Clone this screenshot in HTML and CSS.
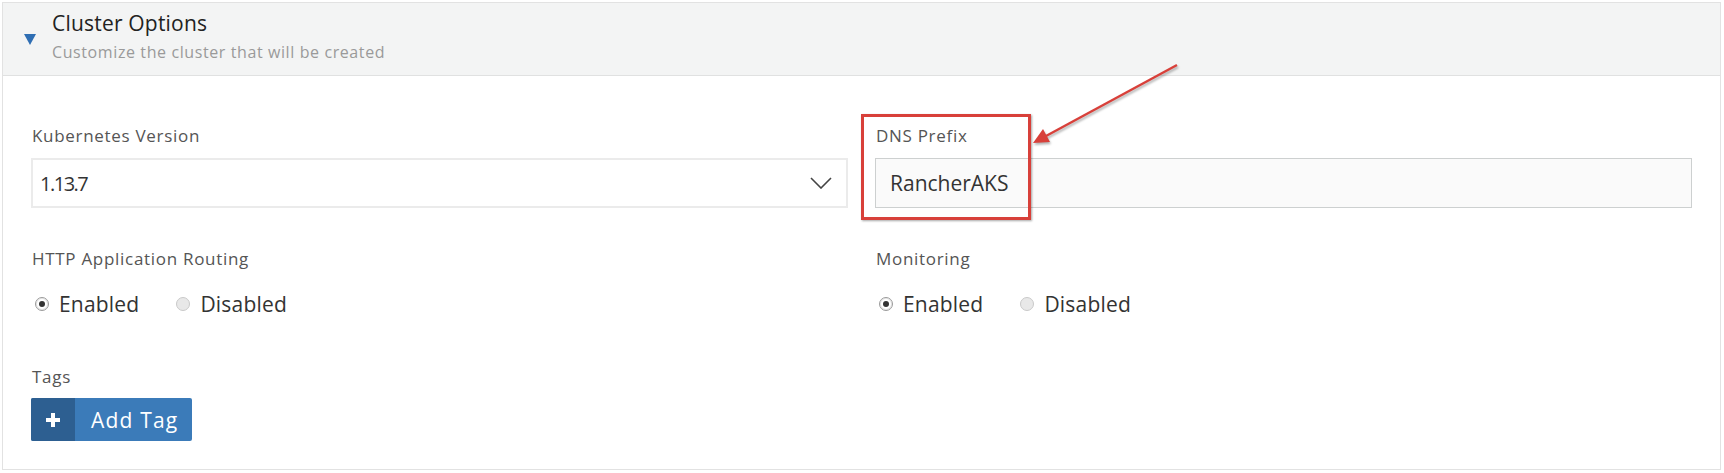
FILE: index.html
```html
<!DOCTYPE html>
<html>
<head>
<meta charset="utf-8">
<link rel="stylesheet" href="styles.css">
</head>
<body>
<div class="page">
  <section class="panel">
    <header class="panel-head">
      <span class="caret"></span>
      <div class="head-text">
        <div class="title">Cluster Options</div>
        <div class="subtitle">Customize the cluster that will be created</div>
      </div>
    </header>
    <div class="panel-body">
      <div class="field">
        <div class="label">Kubernetes Version</div>
        <div class="select">
          <span class="value tight">1.13.7</span>
          <svg class="chevron" width="22" height="12" viewBox="0 0 22 12"><path d="M1 1 L11 11 L21 1" fill="none" stroke="#444" stroke-width="1.6"/></svg>
        </div>
      </div>
      <div class="field">
        <div class="label">DNS Prefix</div>
        <div class="input"><span class="value">RancherAKS</span></div>
      </div>
      <div class="field row2">
        <div class="label">HTTP Application Routing</div>
        <div class="radios">
          <label class="radio"><span class="dot checked"></span>Enabled</label>
          <label class="radio"><span class="dot"></span>Disabled</label>
        </div>
      </div>
      <div class="field row2">
        <div class="label">Monitoring</div>
        <div class="radios">
          <label class="radio"><span class="dot checked"></span>Enabled</label>
          <label class="radio"><span class="dot"></span>Disabled</label>
        </div>
      </div>
      <div class="field row3">
        <div class="label">Tags</div>
        <button class="btn"><span class="btn-icon"><span class="plus"></span></span><span class="btn-text">Add Tag</span></button>
      </div>
    </div>
  </section>
  <div class="callout"></div>
  <svg class="arrow" width="1724" height="473" viewBox="0 0 1724 473">
    <line x1="1177" y1="65" x2="1046" y2="136" stroke="#d8403a" stroke-width="2.5"/>
    <polygon points="1033,143 1043,129 1050,142" fill="#d8403a"/>
  </svg>
</div>
</body>
</html>
```
FILE: styles.css
```css
* { box-sizing: border-box; }
html, body { margin: 0; padding: 0; background: #fff; }
body { font-family: "Open Sans", "Liberation Sans", sans-serif; color: #333; }
.page { position: relative; width: 1724px; height: 473px; padding: 2px 3px 3px 2px; }
.panel { border: 1px solid #e2e2e2; height: 468px; display: flex; flex-direction: column; }
.panel-head { height: 73px; background: #f3f4f4; border-bottom: 1px solid #e0e1e1; display: flex; align-items: flex-start; padding: 8px 0 0 21px; }
.caret { width: 0; height: 0; border-left: 6px solid transparent; border-right: 6px solid transparent; border-top: 11px solid #2f6eb3; margin-top: 23px; margin-right: 16px; }
.title { font-size: 21px; line-height: 24px; color: #222; letter-spacing: 0.2px; }
.subtitle { font-size: 16px; line-height: 20px; color: #9a9a9a; margin-top: 7px; letter-spacing: 0.6px; }
.panel-body { display: grid; grid-template-columns: 817px 817px; column-gap: 27px; padding: 50px 28px 0 28px; align-content: start; }
.label { font-size: 17px; line-height: 20px; color: #555; letter-spacing: 0.7px; padding-left: 1px; }
.select { margin-top: 12px; height: 50px; border: 2px solid #ebebeb; display: flex; align-items: center; justify-content: space-between; padding: 0 14px 0 7px; }
.input { margin-top: 12px; height: 50px; border: 1px solid #cdd0d0; background: #fafafa; display: flex; align-items: center; padding: 0 14px; }
.value { font-size: 21px; color: #333; }
.value.tight { font-size: 20px; letter-spacing: -1.5px; }
.row2 { margin-top: 41px; }
.row3 { margin-top: 48px; }
.radios { display: flex; align-items: center; gap: 37px; margin-top: 20px; height: 30px; padding-left: 4px; }
.radio { display: flex; align-items: center; font-size: 21px; color: #333; letter-spacing: 0.2px; }
.dot { width: 14px; height: 14px; border-radius: 50%; background: #e8e8e8; border: 1px solid #c9c9c9; margin-right: 10px; position: relative; }
.dot.checked { background: #fff; border: 1px solid #9a9a9a; box-shadow: inset 0 0 0 1px #e6e6e6; }
.dot.checked::after { content: ""; position: absolute; left: 3px; top: 3px; width: 6px; height: 6px; border-radius: 50%; background: #333; }
.btn { margin-top: 11px; width: 161px; height: 43px; border: 0; border-radius: 2px; background: #3b7bb9; display: flex; align-items: stretch; padding: 0; font-family: inherit; cursor: pointer; }
.btn-icon { width: 44px; background: #2d5f91; border-radius: 2px 0 0 2px; display: flex; align-items: center; justify-content: center; }
.plus { position: relative; width: 14px; height: 14px; }
.plus::before { content: ""; position: absolute; left: 5px; top: 0; width: 4px; height: 14px; background: #fff; }
.plus::after { content: ""; position: absolute; left: 0; top: 5px; width: 14px; height: 4px; background: #fff; }
.btn-text { display: flex; align-items: center; padding-left: 16px; font-size: 21px; color: #fff; letter-spacing: 1.2px; }
.callout { position: absolute; left: 861px; top: 114px; width: 170px; height: 106px; border: 3px solid #d8403a; box-shadow: 1px 1px 2px rgba(0,0,0,0.35); }
.arrow { position: absolute; left: 0; top: 0; filter: drop-shadow(1px 2px 1px rgba(0,0,0,0.3)); pointer-events: none; }
```
